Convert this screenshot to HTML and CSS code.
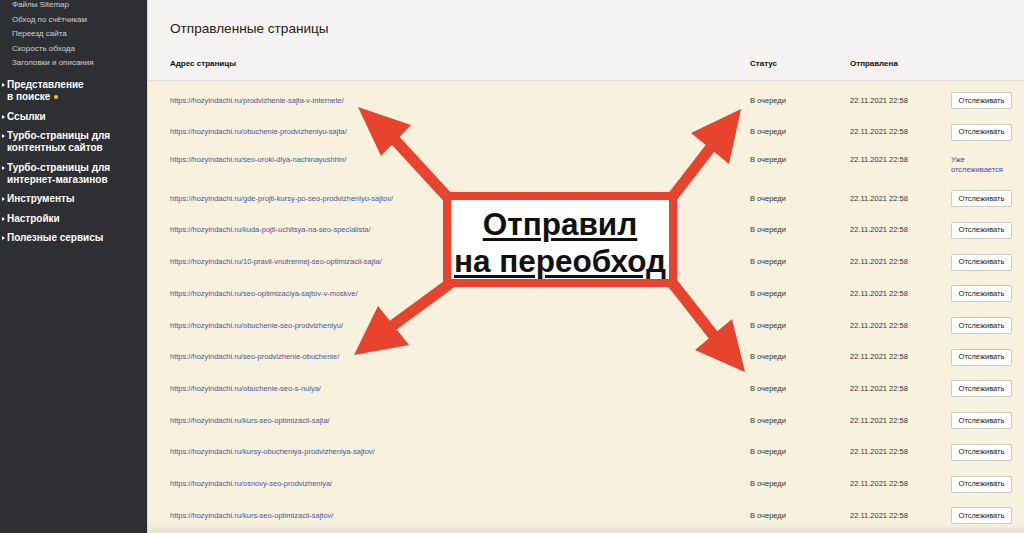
FILE: index.html
```html
<!DOCTYPE html>
<html lang="ru">
<head>
  <meta charset="UTF-8" />
  <meta name="viewport" content="width=device-width, initial-scale=1.0"/>
  <title>Переобход страниц</title>
  <link rel="stylesheet" href="styles.css">
</head>
<body>

  <div class="page">
    <nav class="sidebar">
      <ul class="sub-menu">
        <li>Файлы Sitemap</li>
        <li>Обход по счётчикам</li>
        <li>Переезд сайта</li>
        <li>Скорость обхода</li>
        <li>Заголовки и описания</li>
      </ul>
      <ul class="menu">
        <li>Представление<br>в поиске <span class="dot"></span></li>
        <li>Ссылки</li>
        <li>Турбо-страницы для<br>контентных сайтов</li>
        <li>Турбо-страницы для<br>интернет-магазинов</li>
        <li>Инструменты</li>
        <li>Настройки</li>
        <li>Полезные сервисы</li>
      </ul>
    </nav>

    <main class="content">
      <h1 class="title">Отправленные страницы</h1>

      <table class="pages">
        <colgroup>
          <col class="col-url">
          <col class="col-status">
          <col class="col-date">
          <col>
        </colgroup>
        <thead>
          <tr>
            <th>Адрес страницы</th>
            <th>Статус</th>
            <th>Отправлена</th>
            <th></th>
          </tr>
        </thead>
        <tbody>
          <tr>
            <td><a href="#">https://hozyindachi.ru/prodvizhenie-sajta-v-internete/</a></td>
            <td>В очереди</td>
            <td>22.11.2021 22:58</td>
            <td><button class="track-btn">Отслеживать</button></td>
          </tr>
          <tr>
            <td><a href="#">https://hozyindachi.ru/obuchenie-prodvizheniyu-sajta/</a></td>
            <td>В очереди</td>
            <td>22.11.2021 22:58</td>
            <td><button class="track-btn">Отслеживать</button></td>
          </tr>
          <tr>
            <td><a href="#">https://hozyindachi.ru/seo-uroki-dlya-nachinayushhix/</a></td>
            <td>В очереди</td>
            <td>22.11.2021 22:58</td>
            <td><a href="#" class="tracked">Уже<br>отслеживается</a></td>
          </tr>
          <tr>
            <td><a href="#">https://hozyindachi.ru/gde-projti-kursy-po-seo-prodvizheniyu-sajtov/</a></td>
            <td>В очереди</td>
            <td>22.11.2021 22:58</td>
            <td><button class="track-btn">Отслеживать</button></td>
          </tr>
          <tr>
            <td><a href="#">https://hozyindachi.ru/kuda-pojti-uchitsya-na-seo-specialista/</a></td>
            <td>В очереди</td>
            <td>22.11.2021 22:58</td>
            <td><button class="track-btn">Отслеживать</button></td>
          </tr>
          <tr>
            <td><a href="#">https://hozyindachi.ru/10-pravil-vnutrennej-seo-optimizacii-sajta/</a></td>
            <td>В очереди</td>
            <td>22.11.2021 22:58</td>
            <td><button class="track-btn">Отслеживать</button></td>
          </tr>
          <tr>
            <td><a href="#">https://hozyindachi.ru/seo-optimizaciya-sajtov-v-moskve/</a></td>
            <td>В очереди</td>
            <td>22.11.2021 22:58</td>
            <td><button class="track-btn">Отслеживать</button></td>
          </tr>
          <tr>
            <td><a href="#">https://hozyindachi.ru/obuchenie-seo-prodvizheniyu/</a></td>
            <td>В очереди</td>
            <td>22.11.2021 22:58</td>
            <td><button class="track-btn">Отслеживать</button></td>
          </tr>
          <tr>
            <td><a href="#">https://hozyindachi.ru/seo-prodvizhenie-obuchenie/</a></td>
            <td>В очереди</td>
            <td>22.11.2021 22:58</td>
            <td><button class="track-btn">Отслеживать</button></td>
          </tr>
          <tr>
            <td><a href="#">https://hozyindachi.ru/obuchenie-seo-s-nulya/</a></td>
            <td>В очереди</td>
            <td>22.11.2021 22:58</td>
            <td><button class="track-btn">Отслеживать</button></td>
          </tr>
          <tr>
            <td><a href="#">https://hozyindachi.ru/kurs-seo-optimizacii-sajta/</a></td>
            <td>В очереди</td>
            <td>22.11.2021 22:58</td>
            <td><button class="track-btn">Отслеживать</button></td>
          </tr>
          <tr>
            <td><a href="#">https://hozyindachi.ru/kursy-obucheniya-prodvizheniya-sajtov/</a></td>
            <td>В очереди</td>
            <td>22.11.2021 22:58</td>
            <td><button class="track-btn">Отслеживать</button></td>
          </tr>
          <tr>
            <td><a href="#">https://hozyindachi.ru/osnovy-seo-prodvizheniya/</a></td>
            <td>В очереди</td>
            <td>22.11.2021 22:58</td>
            <td><button class="track-btn">Отслеживать</button></td>
          </tr>
          <tr>
            <td><a href="#">https://hozyindachi.ru/kurs-seo-optimizacii-sajtov/</a></td>
            <td>В очереди</td>
            <td>22.11.2021 22:58</td>
            <td><button class="track-btn">Отслеживать</button></td>
          </tr>
        </tbody>
      </table>
    </main>
  </div>

  <!-- red callout drawn on top of the table -->
  <svg class="arrows" width="1024" height="533" viewBox="0 0 1024 533">
    <g stroke="#e8432d" stroke-width="11" stroke-linecap="butt">
      <line x1="452" y1="202" x2="394" y2="139" />
      <line x1="670" y1="200" x2="711" y2="147" />
      <line x1="452" y1="282" x2="392" y2="326" />
      <line x1="670" y1="280" x2="714" y2="336" />
    </g>
    <g fill="#e8432d">
      <polygon points="358,107 411,125 381,156" />
      <polygon points="741,109 691,133 729,164" />
      <polygon points="354,355 378,306 409,345" />
      <polygon points="745,372 732,319 695,350" />
    </g>
  </svg>

  <div class="callout">
    <span>Отправил</span><br>
    <span>на переобход</span>
  </div>

</body>
</html>
```

FILE: styles.css
```css
body {
  margin: 0;
  width: 1024px;
  height: 533px;
  overflow: hidden;
  font-family: 'Liberation Sans', Arial, sans-serif;
  background-color: #f8f1de;
  position: relative;
}

.page {
  display: flex;
  height: 533px;
}

/* left menu */
.sidebar {
  width: 147px;
  flex-shrink: 0;
  background-color: #2e2f33;
  color: #fff;
}

.sidebar ul {
  list-style: none;
  margin: 0;
  padding: 0;
}

.sub-menu {
  margin-top: -2px !important;
  padding-left: 12px !important;
}

.sub-menu li {
  font-size: 8px;
  line-height: 14.5px;
  color: #cfcfcf;
  white-space: nowrap;
}

.menu {
  margin-top: 5px !important;
}

.menu li {
  position: relative;
  padding: 3.75px 0 3.75px 7px;
  font-size: 10px;
  line-height: 12px;
  font-weight: bold;
  white-space: nowrap;
}

.menu li::before {
  content: '';
  position: absolute;
  left: 2px;
  top: 7.5px;
  border-left: 3px solid #fff;
  border-top: 2.5px solid transparent;
  border-bottom: 2.5px solid transparent;
}

.dot {
  display: inline-block;
  width: 4px;
  height: 4px;
  margin-left: 1px;
  border-radius: 50%;
  background-color: #f0c63c;
  vertical-align: 1px;
}

/* main area */
.content {
  flex: 1;
  position: relative;
  border-left: 1px solid #d9d7d3;
  background: linear-gradient(#f4f3f1 0, #f4f3f1 82px, #f8f1de 82px);
}

.content::after {
  content: '';
  position: absolute;
  left: 0;
  right: 0;
  bottom: 0;
  height: 9px;
  background: linear-gradient(rgba(0,0,0,0), rgba(0,0,0,0.07));
}

.title {
  margin: 0;
  padding: 20px 22px 0;
  font-size: 13.6px;
  line-height: 18px;
  font-weight: normal;
  color: #222;
}

.pages {
  width: 100%;
  border-collapse: collapse;
  table-layout: fixed;
}

.col-url { width: 602px; }
.col-status { width: 100px; }
.col-date { width: 101px; }

.pages th {
  padding: 21px 0 11px;
  text-align: left;
  font-size: 8px;
  line-height: 10px;
  color: #111;
  border-bottom: 1px solid #e2e0dc;
}

.pages td {
  padding: 11px 0 3.72px;
  vertical-align: baseline;
  font-size: 7.5px;
  line-height: 10px;
  color: #333;
  white-space: nowrap;
}

.pages th:first-child,
.pages td:first-child {
  padding-left: 22px;
}

.pages td a {
  color: #4a559e;
  text-decoration: none;
}

.pages td a.tracked {
  color: #3b4ea6;
}

.track-btn {
  width: 61px;
  margin: 0;
  padding: 2.5px 0;
  font-family: inherit;
  font-size: 7.5px;
  line-height: 10px;
  color: #222;
  background-color: #fff;
  border: 1px solid #cdcbc6;
  border-radius: 2px;
}

/* annotation */
.arrows {
  position: absolute;
  left: 0;
  top: 0;
}

.callout {
  position: absolute;
  left: 443px;
  top: 192px;
  width: 218px;
  height: 73px;
  border: 8px solid #e8432d;
  background-color: #fff;
  padding-top: 6px;
  text-align: center;
  font-size: 31.5px;
  line-height: 37px;
  font-weight: bold;
  color: #111;
}

.callout span {
  text-decoration: underline;
  text-decoration-thickness: 2.5px;
  text-underline-offset: 3px;
}
```
